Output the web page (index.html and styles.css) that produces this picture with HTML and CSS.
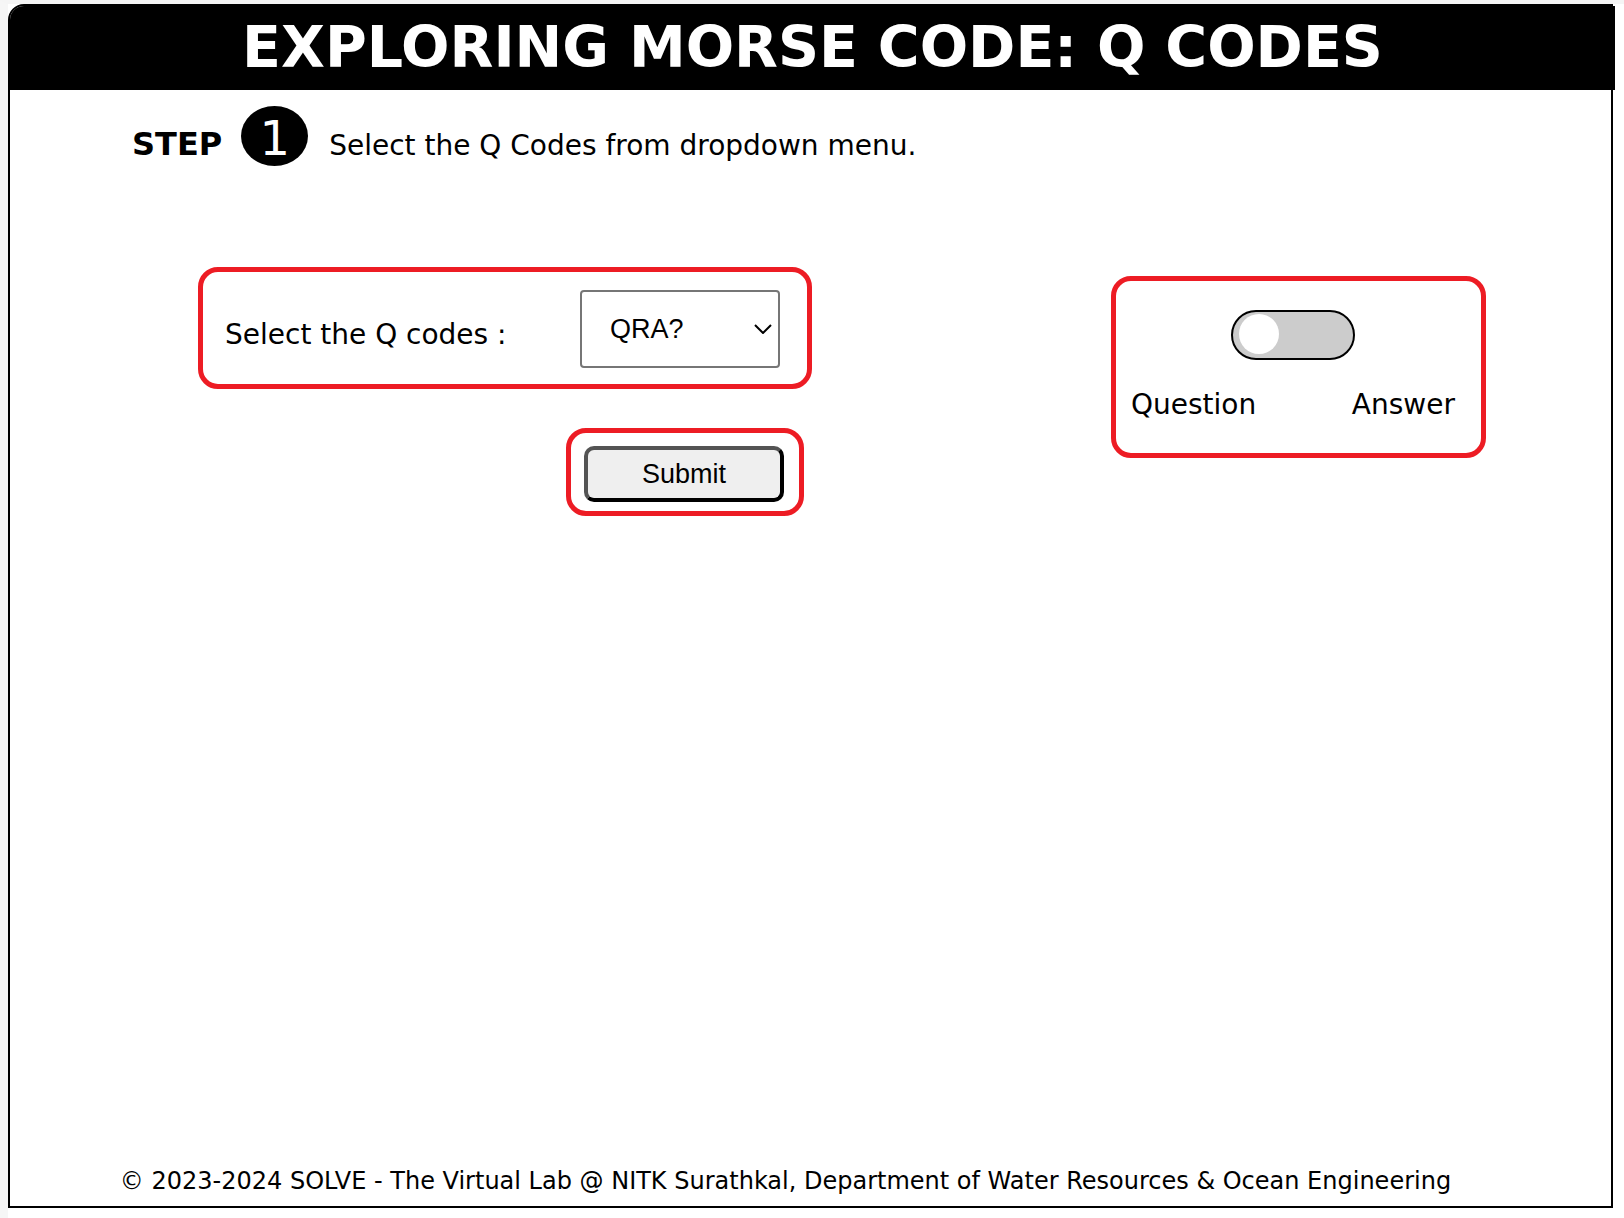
FILE: index.html
```html
<!DOCTYPE html>
<html lang="en">
<head>
<meta charset="utf-8">
<title>Exploring Morse Code: Q Codes</title>
<link rel="stylesheet" href="styles.css">
</head>
<body>
<div class="panel">
  <header class="header"><h1 class="title">EXPLORING MORSE CODE: Q CODES</h1></header>
  <main class="main">
    <div class="step">
      <h2 class="step-label">STEP</h2>
      <span class="step-number">1</span>
      <p class="step-text">Select the Q Codes from dropdown menu.</p>
    </div>
    <div class="work">
      <form class="form">
        <div class="mark mark-select">
          <label class="label" for="qcode">Select the Q codes :</label>
          <span class="select-wrap">
            <select id="qcode" class="select"><option>QRA?</option></select>
            <svg class="chevron" width="18" height="10" viewBox="0 0 18 10" fill="none" stroke="#000" stroke-width="2" aria-hidden="true"><path d="M1 1l8 8 8-8"/></svg>
          </span>
        </div>
        <div class="mark mark-submit">
          <button type="button" class="submit">Submit</button>
        </div>
      </form>
      <div class="mark mark-toggle">
        <input type="checkbox" class="toggle" role="switch" aria-labelledby="question answer">
        <div class="sides"><span id="question">Question</span><span id="answer">Answer</span></div>
      </div>
    </div>
  </main>
  <footer class="footer">© 2023-2024 SOLVE - The Virtual Lab @ NITK Surathkal, Department of Water Resources &amp; Ocean Engineering</footer>
</div>
</body>
</html>
```
FILE: styles.css
```css
* { box-sizing: border-box; }
body {
  display: flex;
  min-height: 100vh;
  margin: 0;
  padding: 0 11px 10px 0;
  border-top: 4px solid #f5f5f5;
  border-left: 8px solid #f6f6f6;
  background: #fff;
  color: #000;
  font: 28px/34px Verdana, "DejaVu Sans", sans-serif;
}
.panel {
  display: flex;
  flex: 1;
  flex-direction: column;
  border: 2px solid #000;
  border-top-left-radius: 16px;
}
.header {
  margin: 0 -4px 0 0;
  border-top-left-radius: 14px;
  background: #000;
  color: #fff;
  text-align: center;
}
.title {
  margin: 0;
  padding: 6px 0 8px;
  font-size: 57px;
  line-height: 70px;
}
.main { flex: 1; }
.step {
  display: flex;
  align-items: baseline;
  padding: 16px 0 0 122px;
}
.step-label {
  margin: 0;
  font-size: 32px;
}
.step-number {
  width: 67px;
  height: 60px;
  margin: 0 21px 0 19px;
  border-radius: 50%;
  background: #000;
  color: #fff;
  font-size: 48px;
  line-height: 64px;
  text-align: center;
}
.step-text { margin: 0; }
.work {
  display: flex;
  align-items: flex-start;
  justify-content: space-between;
  padding: 101px 125px 0 188px;
}
.form { width: 614px; }
.mark {
  border: 5px solid #ed1c24;
  border-radius: 20px;
}
.mark-select {
  display: flex;
  align-items: center;
  justify-content: space-between;
  padding: 18px 27px 16px 22px;
}
.label { padding-top: 12px; }
.select-wrap {
  display: grid;
  align-items: center;
}
.select {
  grid-area: 1 / 1;
  width: 200px;
  height: 78px;
  padding: 0 0 0 28px;
  border: 2px solid #767676;
  border-radius: 4px;
  appearance: none;
  background: #fff;
  color: #000;
  font: 27px "Liberation Sans", Arial, sans-serif;
}
.chevron {
  grid-area: 1 / 1;
  justify-self: end;
  margin-right: 8px;
  pointer-events: none;
}
.mark-submit {
  width: 238px;
  margin: 39px 0 0 368px;
  padding: 13px 15px 9px 13px;
}
.submit {
  display: block;
  width: 100%;
  height: 56px;
  padding: 0;
  border: 4px outset #000;
  border-radius: 10px;
  background: #efefef;
  color: #000;
  font: 27px "Liberation Sans", Arial, sans-serif;
}
.mark-toggle {
  width: 375px;
  height: 182px;
  margin-top: 9px;
  padding: 29px 26px 0 15px;
}
.toggle {
  display: flex;
  width: 124px;
  height: 50px;
  margin: 0 auto;
  padding: 2px 6px;
  border: 2px solid #000;
  border-radius: 25px;
  appearance: none;
  background: #ccc;
}
.toggle::before {
  width: 40px;
  height: 40px;
  border-radius: 50%;
  background: #fff;
  content: "";
}
.toggle:checked { justify-content: flex-end; }
.sides {
  display: flex;
  justify-content: space-between;
  margin-top: 28px;
}
.footer {
  padding: 0 50px 8px 0;
  font-size: 24px;
  text-align: center;
}
```
